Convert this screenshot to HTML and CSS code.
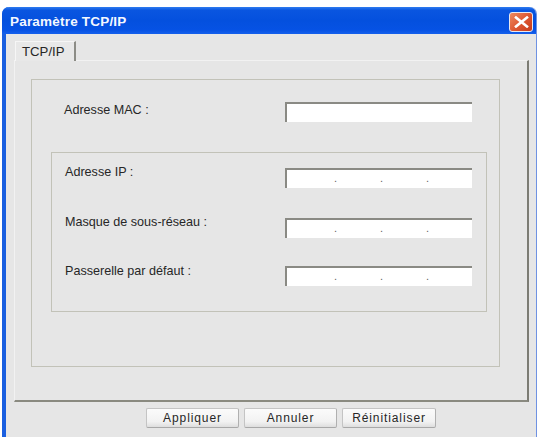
FILE: index.html
```html
<!DOCTYPE html>
<html lang="fr">
<head>
<meta charset="utf-8">
<title>Paramètre TCP/IP</title>
<link rel="stylesheet" href="styles.css">
</head>
<body>
<div class="window">
  <div class="titlebar">
    <span class="title">Paramètre TCP/IP</span>
    <span class="close">
      <svg width="15" height="12" viewBox="0 0 15 12"><path d="M2 1.5 13 10.5M13 1.5 2 10.5" stroke="#fff" stroke-width="2.6" stroke-linecap="square" fill="none"/></svg>
    </span>
  </div>
  <div class="content">
    <div class="tabs"><div class="tab">TCP/IP</div></div>
    <div class="pane">
      <div class="group outer">
        <div class="row mac">
          <span class="label">Adresse MAC :</span>
          <div class="field"></div>
        </div>
        <div class="group inner">
          <div class="row ip">
            <span class="label">Adresse IP :</span>
            <div class="field dots"><i>.</i><i>.</i><i>.</i></div>
          </div>
          <div class="row ip">
            <span class="label">Masque de sous-réseau :</span>
            <div class="field dots"><i>.</i><i>.</i><i>.</i></div>
          </div>
          <div class="row ip last">
            <span class="label">Passerelle par défaut :</span>
            <div class="field dots"><i>.</i><i>.</i><i>.</i></div>
          </div>
        </div>
      </div>
    </div>
    <div class="buttons">
      <button class="btn">Appliquer</button>
      <button class="btn">Annuler</button>
      <button class="btn wide">Réinitialiser</button>
    </div>
  </div>
</div>
</body>
</html>
```
FILE: styles.css
```css
html, body {
  margin: 0;
  height: 437px;
  overflow: hidden;
  background: #fff;
}
body {
  font-family: "Liberation Sans", Arial, sans-serif;
  font-size: 12.6px;
  color: #262626;
  padding-top: 7px;
  box-sizing: border-box;
}
.window {
  width: 535px;
  margin-left: 2px;
  height: 430px;
  display: flex;
  flex-direction: column;
  background: #e6e6e6;
  border-left: 4px solid #1a5fe0;
  border-right: 1px solid #6f92e2;
  border-top-left-radius: 7px;
  border-top-right-radius: 7px;
  box-sizing: border-box;
}
.titlebar {
  height: 27px;
  margin: 0 0 0 -4px;
  padding: 1px 3px 0 8px;
  flex: none;
  display: flex;
  align-items: center;
  justify-content: space-between;
  box-sizing: border-box;
  border-top-left-radius: 7px;
  border-top-right-radius: 7px;
  background: linear-gradient(180deg, #2f7cf0 0%, #0a56e0 12%, #0450de 50%, #0652e4 85%, #1560ec 100%);
}
.title {
  color: #f4f8ff;
  font-size: 13.5px;
  font-weight: bold;
  letter-spacing: 0.2px;
}
.close {
  width: 24px;
  height: 20px;
  margin-top: 1px;
  display: flex;
  align-items: center;
  justify-content: center;
  border: 1px solid #e8e8f0;
  border-radius: 3px;
  background: linear-gradient(135deg, #ee8a60 0%, #dc5530 55%, #c63c1c 100%);
  box-sizing: border-box;
}
.content {
  flex: 1;
  display: flex;
  flex-direction: column;
  padding: 7px 0 0 8px;
}
.tabs {
  display: flex;
  padding-left: 1px;
  height: 19px;
  position: relative;
  z-index: 1;
}
.tab {
  width: 61px;
  height: 20px;
  box-sizing: border-box;
  padding: 2px 0 0 6px;
  font-size: 13.2px;
  background: #e8e8e8;
  border-top: 1px solid #f6f6f6;
  border-left: 1px solid #f6f6f6;
  border-right: 2px solid #8c8c86;
}
.pane {
  height: 342px;
  width: 515px;
  box-sizing: border-box;
  padding: 18px 0 0 16px;
  border-top: 1px solid #f2f2f2;
  border-left: 1px solid #f2f2f2;
  border-right: 2px solid #7c7c74;
  border-bottom: 2px solid #8a8a80;
}
.group {
  border: 1px solid #c2c2b8;
  box-sizing: border-box;
}
.outer {
  width: 469px;
  height: 288px;
  display: flex;
  flex-direction: column;
}
.row {
  display: flex;
  justify-content: space-between;
}
.field {
  width: 187px;
  height: 20px;
  box-sizing: border-box;
  background: #fff;
  border-top: 2px solid #8a8a84;
  border-left: 2px solid #8a8a84;
}
.mac {
  margin: 22px 27px 0 32px;
}
.mac .label {
  padding-top: 1px;
}
.inner {
  margin: 30px 0 0 19px;
  width: 436px;
  height: 160px;
  padding: 15px 14px 0 13px;
  display: flex;
  flex-direction: column;
  gap: 30px;
}
.ip {
  height: 20px;
}
.ip .label {
  margin-top: -3px;
}
.last {
  margin-top: -2px;
}
.last .label {
  margin-top: -2px;
}
.dots {
  display: flex;
  padding-left: 47px;
  gap: 45px;
  font-size: 11px;
  line-height: 16px;
  color: #666;
}
.dots i {
  font-style: normal;
  width: 1px;
}
.buttons {
  display: flex;
  gap: 5px;
  padding: 6px 0 0 132px;
}
.btn {
  width: 93px;
  height: 20px;
  padding: 0;
  font: 12px "Liberation Sans", Arial, sans-serif;
  letter-spacing: 0.9px;
  color: #262626;
  background: linear-gradient(180deg, #fbfbfb 0%, #f2f2f2 70%, #dedede 100%);
  border: 1px solid #c4c4c4;
  border-bottom-color: #a8a8a8;
  border-right-color: #b0b0b0;
  border-radius: 2px;
}
.wide {
  width: 94px;
}
```
